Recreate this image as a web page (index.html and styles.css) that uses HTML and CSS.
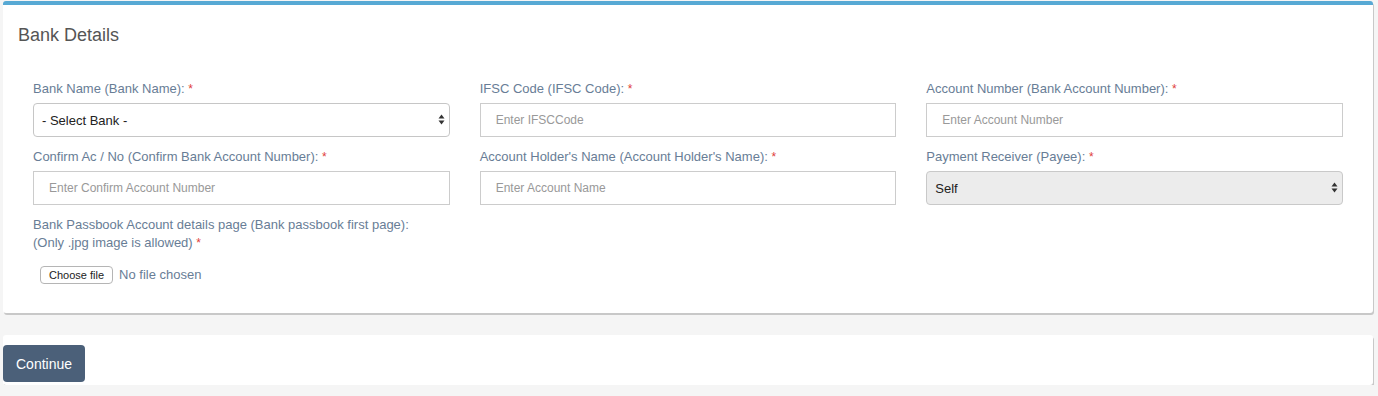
FILE: index.html
```html
<!DOCTYPE html>
<html lang="en">
<head>
<meta charset="utf-8">
<title>Bank Details</title>
<link rel="stylesheet" href="styles.css">
</head>
<body>
<div class="page">
  <section class="card card-main">
    <header class="card-header">
      <h3 class="card-title">Bank Details</h3>
    </header>
    <div class="card-body">
      <div class="form-grid">
        <div class="field">
          <label class="field-label">Bank Name (Bank Name): <span class="req">*</span></label>
          <div class="select-wrap">
            <select class="control select-control">
              <option>- Select Bank -</option>
            </select>
            <svg class="select-arrows" width="7" height="11" viewBox="0 0 7 11"><path d="M3.5 0.5 L6.5 4.5 L0.5 4.5 Z M3.5 10.5 L6.5 6.5 L0.5 6.5 Z" fill="#333"/></svg>
          </div>
        </div>
        <div class="field">
          <label class="field-label">IFSC Code (IFSC Code): <span class="req">*</span></label>
          <input class="control text-control" type="text" placeholder="Enter IFSCCode">
        </div>
        <div class="field">
          <label class="field-label">Account Number (Bank Account Number): <span class="req">*</span></label>
          <input class="control text-control" type="text" placeholder="Enter Account Number">
        </div>
        <div class="field">
          <label class="field-label">Confirm Ac / No (Confirm Bank Account Number): <span class="req">*</span></label>
          <input class="control text-control" type="text" placeholder="Enter Confirm Account Number">
        </div>
        <div class="field">
          <label class="field-label">Account Holder's Name (Account Holder's Name): <span class="req">*</span></label>
          <input class="control text-control" type="text" placeholder="Enter Account Name">
        </div>
        <div class="field">
          <label class="field-label">Payment Receiver (Payee): <span class="req">*</span></label>
          <div class="select-wrap">
            <select class="control select-control select-muted">
              <option>Self</option>
            </select>
            <svg class="select-arrows" width="7" height="11" viewBox="0 0 7 11"><path d="M3.5 0.5 L6.5 4.5 L0.5 4.5 Z M3.5 10.5 L6.5 6.5 L0.5 6.5 Z" fill="#333"/></svg>
          </div>
        </div>
        <div class="field">
          <label class="field-label">Bank Passbook Account details page (Bank passbook first page):<br>(Only .jpg image is allowed) <span class="req">*</span></label>
          <div class="file-wrap">
            <label class="file-button">Choose file<input class="file-input" type="file" accept=".jpg"></label>
            <span class="file-status">No file chosen</span>
          </div>
        </div>
      </div>
    </div>
  </section>
  <section class="card card-actions">
    <button class="btn-continue" type="button">Continue</button>
  </section>
</div>
</body>
</html>
```

FILE: styles.css
```css
* {
  box-sizing: border-box;
}

html, body {
  margin: 0;
  padding: 0;
  background: #f5f5f5;
}

body {
  font-family: "Liberation Sans", Arial, sans-serif;
  color: #333;
}

.page {
  padding: 1px 5px 0 3px;
}

.card {
  background: #fff;
  border-radius: 3px;
  box-shadow: 1px 2px 0 #c8c8c8;
}

.card-main {
  border-top: 4px solid #57a9d4;
  padding-bottom: 18px;
}

.card-header {
  padding: 20px 15px 0 15px;
}

.card-title {
  margin: 0;
  font-size: 18px;
  line-height: 20px;
  font-weight: normal;
  color: #555;
}

.card-body {
  padding: 35px 15px 0 15px;
}

.form-grid {
  display: grid;
  grid-template-columns: repeat(3, 1fr);
  column-gap: 30px;
  padding: 0 15px;
}

.field {
  display: flex;
  flex-direction: column;
  margin-bottom: 11px;
}

.field-label {
  font-size: 13px;
  line-height: 18px;
  color: #687d96;
  margin-bottom: 5px;
}

.req {
  color: #e0403a;
  font-size: 12px;
}

.control {
  height: 34px;
  width: 100%;
  border: 1px solid #ccc;
  font-family: "Liberation Sans", Arial, sans-serif;
  outline: none;
  margin: 0;
}

.text-control {
  font-size: 12px;
  padding: 0 15px;
  color: #333;
  background: #fff;
  border-radius: 0;
}

.text-control::placeholder {
  color: #999;
}

.select-wrap {
  position: relative;
}

.select-control {
  appearance: none;
  -webkit-appearance: none;
  font-size: 13px;
  color: #222;
  padding: 0 24px 0 8px;
  background: #fff;
  border-color: #c6c6c6;
  border-radius: 4px;
}

.select-muted {
  background: #ececec;
  border-color: #c9c9c9;
}

.select-arrows {
  position: absolute;
  right: 5px;
  top: 11px;
  pointer-events: none;
}

.file-wrap {
  display: flex;
  align-items: center;
  gap: 6px;
  height: 18px;
  margin-top: 9px;
  padding: 0 7px;
}

.file-button {
  display: flex;
  align-items: center;
  height: 18px;
  padding: 0 8px;
  font-size: 11px;
  color: #222;
  background: #fff;
  border: 1px solid #b5b5b5;
  border-radius: 4px;
}

.file-input {
  display: none;
}

.file-status {
  font-size: 13px;
  color: #687d96;
  line-height: 18px;
}

.card-actions {
  margin-top: 22px;
  padding: 10px 0 3px 0;
}

.btn-continue {
  display: block;
  height: 37px;
  padding: 0 13px;
  border: none;
  border-radius: 4px;
  background: #4b6079;
  color: #fff;
  font-family: "Liberation Sans", Arial, sans-serif;
  font-size: 14px;
}
```
